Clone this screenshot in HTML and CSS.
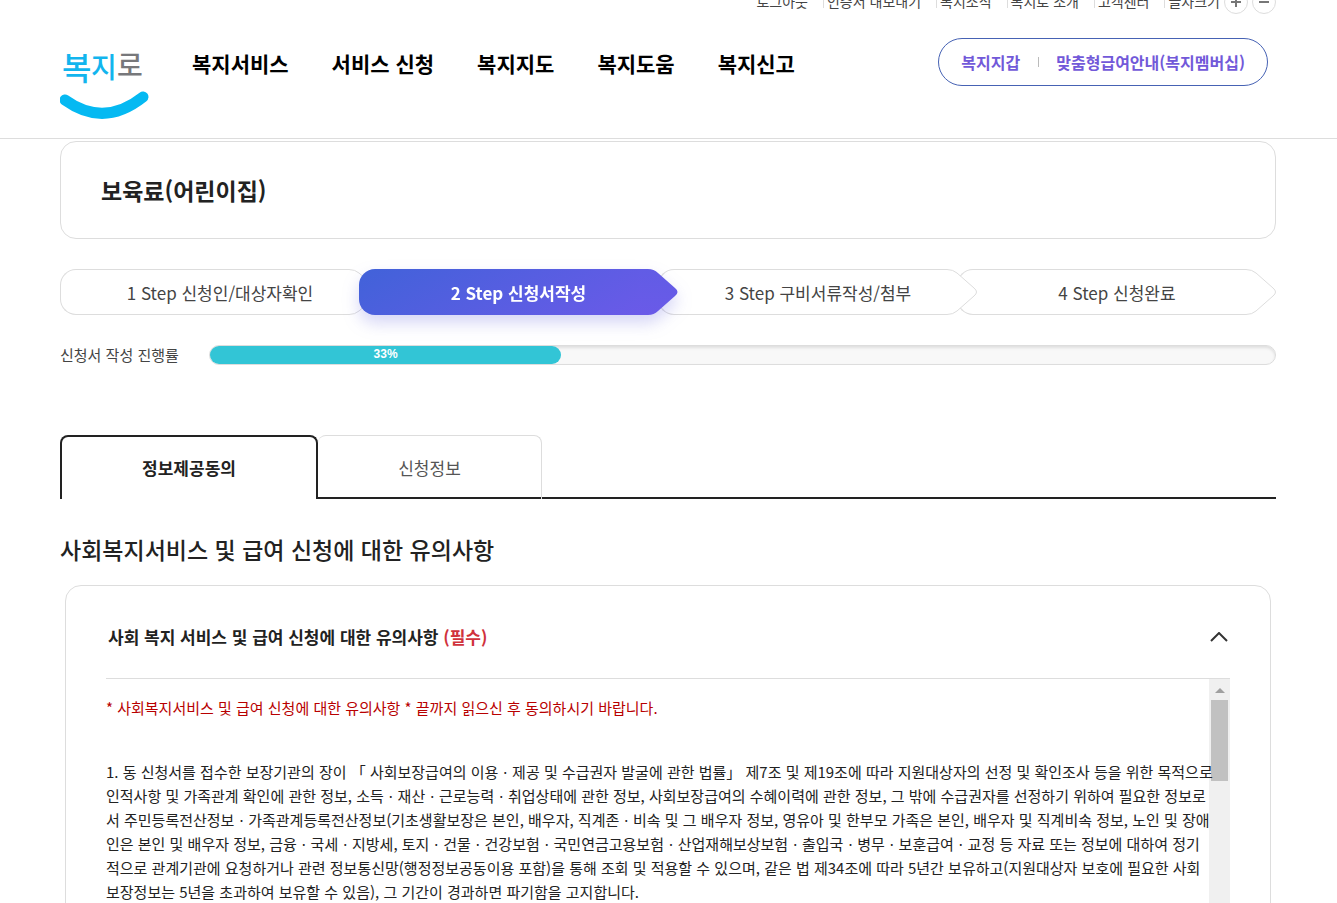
FILE: index.html
```html
<!DOCTYPE html>
<html lang="ko">
<head>
    <meta charset="UTF-8">
    <meta name="viewport" content="width=device-width, initial-scale=1.0">
    <title>복지로 - 보육료(어린이집)</title>
    <link rel="stylesheet" href="styles.css">
</head>
<body>
    <header class="header">
        <nav class="util" aria-label="유틸 메뉴">
            <ul class="util-list">
                <li><a href="#">로그아웃</a></li>
                <li><a href="#">인증서 내보내기</a></li>
                <li><a href="#">복지소식</a></li>
                <li><a href="#">복지로 소개</a></li>
                <li><a href="#">고객센터</a></li>
                <li>글자크기</li>
            </ul>
            <button type="button" class="zoom-btn" aria-label="글자 크게">
                <svg viewBox="0 0 10 10" width="10" height="10"><path d="M5 0v10M0 5h10"/></svg>
            </button>
            <button type="button" class="zoom-btn" aria-label="글자 작게">
                <svg viewBox="0 0 10 10" width="10" height="10"><path d="M0 5h10"/></svg>
            </button>
        </nav>

        <div class="gnb">
            <a href="#" class="logo" aria-label="복지로">
                <svg viewBox="0 0 90 82" width="90" height="82">
                    <text class="logo-blue" x="2" y="42" font-size="32">복</text>
                    <text class="logo-blue" x="31" y="40" font-size="28">지</text>
                    <text class="logo-gray" x="57" y="38" font-size="28">로</text>
                    <path class="logo-smile" d="M5 62Q44 90 83 59"/>
                </svg>
            </a>
            <ul class="menu">
                <li><a href="#">복지서비스</a></li>
                <li><a href="#">서비스 신청</a></li>
                <li><a href="#">복지지도</a></li>
                <li><a href="#">복지도움</a></li>
                <li><a href="#">복지신고</a></li>
            </ul>
            <div class="quick">
                <a href="#">복지지갑</a>
                <a href="#">맞춤형급여안내(복지멤버십)</a>
            </div>
        </div>
    </header>

    <main class="container">
        <div class="title-box">
            <h1>보육료(어린이집)</h1>
        </div>

        <ol class="steps">
            <li class="step">
                <span class="step-body">1 Step 신청인/대상자확인</span>
                <svg class="step-cap" viewBox="0 0 40 46"><path d="M0 .5H10Q16 .5 20 4L37 19Q42 23 37 27L20 42Q16 45.500 10 45.500H0"/></svg>
            </li>
            <li class="step active">
                <span class="step-body">2 Step 신청서작성</span>
                <svg class="step-cap" viewBox="0 0 40 46">
                    <defs>
                        <linearGradient id="cap_fill" x1="0" y1="0" x2="0" y2="1">
                            <stop offset="0" stop-color="#615ce5"/>
                            <stop offset="1" stop-color="#6a5ae8"/>
                        </linearGradient>
                    </defs>
                    <path d="M0 0H10Q16 0 20 4L37 19Q42 23 37 27L20 42Q16 46 10 46H0z" fill="url(#cap_fill)"/>
                </svg>
            </li>
            <li class="step">
                <span class="step-body">3 Step 구비서류작성/첨부</span>
                <svg class="step-cap" viewBox="0 0 40 46"><path d="M0 .5H10Q16 .5 20 4L37 19Q42 23 37 27L20 42Q16 45.500 10 45.500H0"/></svg>
            </li>
            <li class="step">
                <span class="step-body">4 Step 신청완료</span>
                <svg class="step-cap" viewBox="0 0 40 46"><path d="M0 .5H10Q16 .5 20 4L37 19Q42 23 37 27L20 42Q16 45.500 10 45.500H0"/></svg>
            </li>
        </ol>

        <div class="progress">
            <span class="progress-label" id="progress_label">신청서 작성 진행률</span>
            <div class="progress-track" role="progressbar" aria-labelledby="progress_label" aria-valuenow="33" aria-valuemin="0" aria-valuemax="100">
                <div class="progress-bar" style="width: 33%">33%</div>
            </div>
        </div>

        <div class="tabs" role="tablist">
            <button type="button" class="tab on" role="tab" aria-selected="true">정보제공동의</button>
            <button type="button" class="tab" role="tab" aria-selected="false">신청정보</button>
        </div>

        <h2>사회복지서비스 및 급여 신청에 대한 유의사항</h2>

        <section class="accordion">
            <div class="accordion-head">
                <h3>사회 복지 서비스 및 급여 신청에 대한 유의사항 <em>(필수)</em></h3>
                <button type="button" class="toggle" aria-label="접기">
                    <svg viewBox="0 0 18 10" width="18" height="10"><path d="M1 9l8-8 8 8"/></svg>
                </button>
            </div>
            <div class="accordion-body">
                <div class="terms">
                    <p class="notice">* 사회복지서비스 및 급여 신청에 대한 유의사항 * 끝까지 읽으신 후 동의하시기 바랍니다.</p>
                    <p>1. 동 신청서를 접수한 보장기관의 장이 「 사회보장급여의 이용ㆍ제공 및 수급권자 발굴에 관한 법률」 제7조 및 제19조에 따라 지원대상자의 선정 및 확인조사 등을 위한 목적으로<br>
                    인적사항 및 가족관계 확인에 관한 정보, 소득ㆍ재산ㆍ근로능력ㆍ취업상태에 관한 정보, 사회보장급여의 수혜이력에 관한 정보, 그 밖에 수급권자를 선정하기 위하여 필요한 정보로<br>
                    서 주민등록전산정보ㆍ가족관계등록전산정보(기초생활보장은 본인, 배우자, 직계존ㆍ비속 및 그 배우자 정보, 영유아 및 한부모 가족은 본인, 배우자 및 직계비속 정보, 노인 및 장애<br>
                    인은 본인 및 배우자 정보, 금융ㆍ국세ㆍ지방세, 토지ㆍ건물ㆍ건강보험ㆍ국민연금고용보험ㆍ산업재해보상보험ㆍ출입국ㆍ병무ㆍ보훈급여ㆍ교정 등 자료 또는 정보에 대하여 정기<br>
                    적으로 관계기관에 요청하거나 관련 정보통신망(행정정보공동이용 포함)을 통해 조회 및 적용할 수 있으며, 같은 법 제34조에 따라 5년간 보유하고(지원대상자 보호에 필요한 사회<br>
                    보장정보는 5년을 초과하여 보유할 수 있음), 그 기간이 경과하면 파기함을 고지합니다.</p>
                </div>
                <div class="scrollbar" aria-hidden="true">
                    <svg viewBox="0 0 21 21" width="21" height="21"><path d="M6 14l5-5 5 5z"/></svg>
                    <div class="scroll-thumb"></div>
                </div>
            </div>
        </section>
    </main>
</body>
</html>
```
FILE: styles.css
```css
* {
    box-sizing: border-box;
}

body {
    margin: 0;
    height: 100vh;
    overflow: hidden;
    font-family: 'Noto Sans CJK KR', 'Noto Sans', sans-serif;
    font-size: 15px;
    line-height: 24px;
    color: #222;
    background-color: #fff;
}

h1, h2, h3, p, ul, ol {
    margin: 0;
    padding: 0;
}

ul, ol {
    list-style: none;
}

a {
    color: inherit;
    text-decoration: none;
}

button {
    font-family: inherit;
    cursor: pointer;
}

/* header */
.header {
    margin-top: -10px;
    height: 149px;
    padding: 0 61px 0 60px;
    border-bottom: 1px solid #ddd;
}

.util {
    display: flex;
    justify-content: flex-end;
    gap: 4px;
    font-size: 14px;
    color: #444;
}

.util-list {
    display: flex;
    line-height: 22px;
}

.util-list li + li {
    margin-left: 15px;
    padding-left: 4px;
    background: linear-gradient(#ddd, #ddd) no-repeat 0 6px / 1px 12px;
}

.zoom-btn {
    display: flex;
    align-items: center;
    justify-content: center;
    width: 24px;
    height: 24px;
    padding: 0;
    border: 1px solid #ddd;
    border-radius: 50%;
    background: #fff;
}

.zoom-btn svg {
    fill: none;
    stroke: #777;
    stroke-width: 2;
}

.gnb {
    display: flex;
    align-items: flex-start;
    padding: 24px 8px 0 0;
}

.logo svg {
    display: block;
}

.logo-blue,
.logo-gray {
    font-weight: 500;
}

.logo-blue {
    fill: #12b5ee;
}

.logo-gray {
    fill: #77787b;
}

.logo-smile {
    fill: none;
    stroke: #05b9f2;
    stroke-width: 11;
    stroke-linecap: round;
}

.menu {
    display: flex;
    gap: 43px;
    margin-left: 42px;
    font-size: 21px;
    font-weight: 700;
    line-height: 50px;
    color: #000;
}

.quick {
    display: flex;
    margin-left: auto;
    padding: 0 22px;
    border: 1px solid #4662b4;
    border-radius: 24px;
    font-size: 16px;
    font-weight: 700;
    line-height: 46px;
    color: #7259d9;
}

.quick a + a {
    margin-left: 18px;
    padding-left: 18px;
    background: linear-gradient(#bbb, #bbb) no-repeat 0 18px / 1px 10px;
}

/* content */
.container {
    padding: 2px 61px 0 60px;
}

.title-box {
    padding: 32px 40px;
    border: 1px solid #ddd;
    border-radius: 16px;
}

h1 {
    font-size: 23px;
    font-weight: 700;
    line-height: 32px;
}

/* steps */
.steps {
    display: flex;
    margin-top: 30px;
    padding-right: 20px;
    font-size: 17px;
    color: #444;
}

.step {
    position: relative;
    flex: 1;
    display: flex;
    min-width: 0;
    margin-right: -20px;
}

.step:nth-child(3) {
    z-index: 1;
}

.step-body {
    flex: 1;
    height: 46px;
    padding-left: 40px;
    border: 1px solid #ddd;
    border-right: 0;
    border-radius: 16px 0 0 16px;
    line-height: 46px;
    text-align: center;
    background: #fff;
}

.step-cap {
    width: 40px;
    height: 46px;
    fill: #fff;
    stroke: #ddd;
}

.step.active {
    z-index: 2;
    font-weight: 700;
    color: #fff;
    filter: drop-shadow(0 8px 8px rgba(90, 90, 220, 0.25));
}

.active .step-body {
    border: 0;
    line-height: 48px;
    background: linear-gradient(150deg, #4162d9, #6a5ae8);
}

.active .step-cap {
    stroke: none;
}

/* progress */
.progress {
    display: flex;
    align-items: center;
    gap: 30px;
    margin-top: 28px;
    color: #444;
}

.progress-track {
    flex: 1;
    height: 20px;
    border: 1px solid #ddd;
    border-radius: 10px;
    background: #f8f8f8;
    box-shadow: inset 0 2px 3px rgba(0, 0, 0, 0.1);
}

.progress-bar {
    height: 18px;
    border-radius: 9px;
    background: #32c5d6;
    color: #fff;
    font-family: 'Liberation Sans', sans-serif;
    font-size: 12px;
    font-weight: 700;
    line-height: 17px;
    text-align: center;
}

/* tabs */
.tabs {
    display: flex;
    margin-top: 68px;
    background: linear-gradient(#222, #222) no-repeat 0 100% / 100% 2px;
}

.tab {
    height: 64px;
    width: 224px;
    border: 1px solid #ddd;
    border-width: 1px 1px 0 0;
    border-radius: 8px 8px 0 0;
    background: none;
    font-size: 17px;
    color: #555;
}

.tab.on {
    width: 258px;
    padding-bottom: 2px;
    border: 2px solid #222;
    border-bottom: 0;
    background: #fff;
    font-weight: 700;
    color: #222;
}

h2 {
    margin-top: 34px;
    font-size: 23px;
    font-weight: 500;
    line-height: 32px;
}

/* accordion */
.accordion {
    margin: 20px 5px 0;
    padding: 0 40px;
    border: 1px solid #ddd;
    border-radius: 16px 16px 0 0;
}

.accordion-head {
    display: flex;
    align-items: center;
    justify-content: space-between;
    height: 93px;
    padding: 10px 2px 0;
    border-bottom: 1px solid #ddd;
}

h3 {
    font-size: 17px;
    font-weight: 700;
}

h3 em {
    font-style: normal;
    color: #d0323c;
}

.toggle {
    display: flex;
    padding: 0;
    border: 0;
    background: none;
}

.toggle svg {
    fill: none;
    stroke: #333;
    stroke-width: 2;
}

.accordion-body {
    display: flex;
    height: 360px;
    overflow: hidden;
}

.terms {
    position: relative;
    z-index: 1;
    flex: 1;
    min-width: 0;
    padding-top: 17px;
    white-space: nowrap;
}

.notice {
    margin-bottom: 40px;
    color: #b80000;
}

.scrollbar {
    width: 21px;
    background: #f0f0f0;
}

.scrollbar svg {
    display: block;
    fill: #a0a0a0;
}

.scroll-thumb {
    height: 81px;
    margin: 0 2px;
    background: #c1c1c1;
}
```
